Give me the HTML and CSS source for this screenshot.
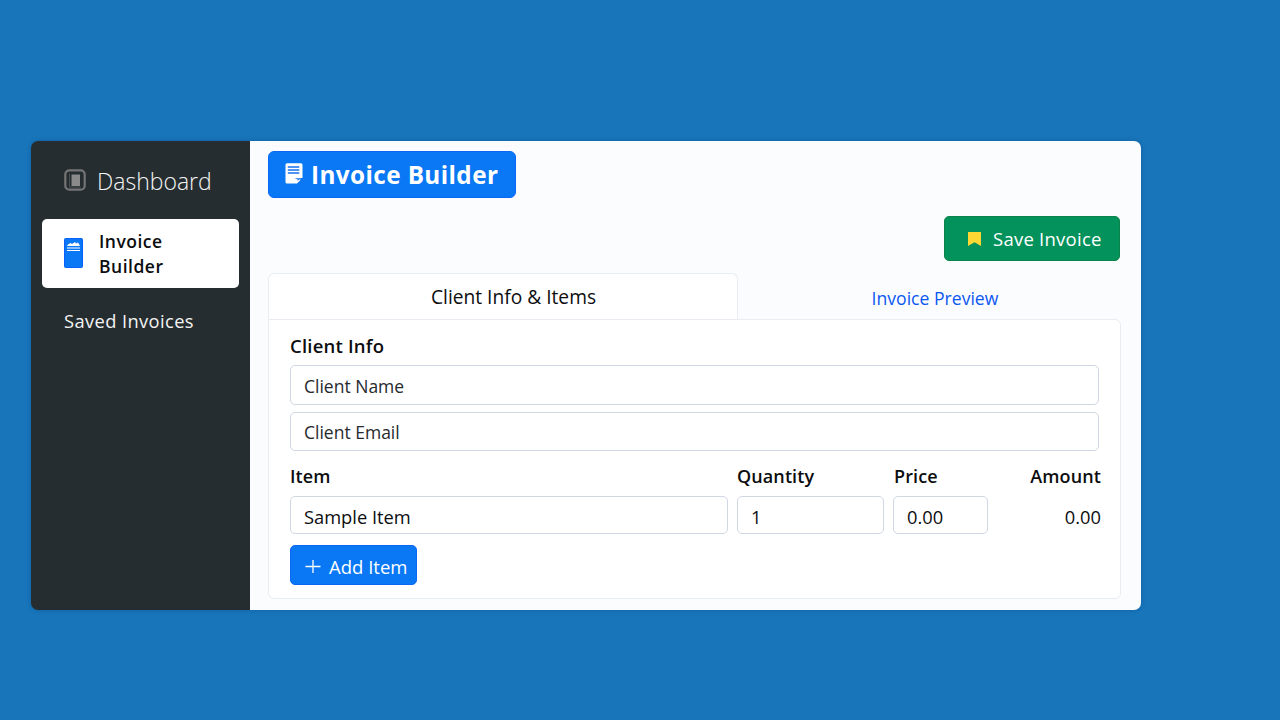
FILE: index.html
```html
<!DOCTYPE html>
<html lang="en">
<head>
<meta charset="utf-8">
<title>Invoice Builder</title>
<link rel="stylesheet" href="styles.css">
</head>
<body>
<div class="app">
  <aside class="sidebar">
    <div class="brand">
      <svg class="brand-icon" width="22" height="22" viewBox="0 0 22 22"><rect x="1.300" y="1.300" width="19.400" height="19.400" rx="4" fill="none" stroke="#747474" stroke-width="2.200"/><path d="M5.500 4.500v13.500h11" stroke="#4c5051" stroke-width="1" fill="none"/><rect x="7.500" y="5.500" width="8.500" height="11.500" fill="#8a8a8a"/></svg>
      <span class="brand-text">Dashboard</span>
    </div>
    <nav class="nav">
      <a class="nav-item active">
        <svg class="nav-icon" width="19" height="30" viewBox="0 0 19 30"><rect x=".5" y=".5" width="18" height="29" rx="1" fill="#0a78f5" stroke="#0860ff"/><path d="M3 8l1-1.500L6.500 5 8 6l3-2 1 1.500L14 4.500l1 1.500 1 2z" fill="#fff"/><path d="M3 10h13M3 12.500h13" stroke="#fff" stroke-width="1.200"/></svg>
        <span class="nav-label">Invoice<br>Builder</span>
      </a>
      <a class="nav-item saved"><span class="saved-label">Saved Invoices</span></a>
    </nav>
  </aside>
  <main class="main">
    <h1 class="title">
      <svg class="title-icon" width="18" height="21" viewBox="0 0 18 21"><path d="M2 .3h14a1.500 1.500 0 0 1 1.500 1.500V15l-2 .2v1.800L12 20.500H2A1.500 1.500 0 0 1 .5 19V1.800A1.500 1.500 0 0 1 2 .3z" fill="#fff"/><path d="M2.800 4h11.500M2.800 7h11.500M2.800 10h11.500" stroke="#1670f0" stroke-width="1.300"/><path d="M9.500 15.200h7.500v1.300h-3l-1.300 1.600v-1.600z" fill="#1670f0"/></svg>
      <span class="title-text">Invoice Builder</span>
    </h1>
    <div class="actions">
      <button class="save">
        <svg width="13" height="14" viewBox="0 0 13 14"><path d="M0 0h13v14l-6.500-3.800L0 14z" fill="#fdd835"/></svg>
        <span class="save-text">Save Invoice</span>
      </button>
    </div>
    <div class="tabs">
      <div class="tab tab-active"><span class="tab-text">Client Info &amp; Items</span></div>
      <div class="tab tab-link"><span class="link-text">Invoice Preview</span></div>
    </div>
    <section class="panel">
      <h2 class="label heading"><span>Client Info</span></h2>
      <div class="field client"><span>Client Name</span></div>
      <div class="field client"><span>Client Email</span></div>
      <div class="items">
        <div class="label"><span>Item</span></div>
        <div class="label"><span>Quantity</span></div>
        <div class="label price"><span>Price</span></div>
        <div class="label end"><span>Amount</span></div>
        <div class="field"><span>Sample Item</span></div>
        <div class="field"><span>1</span></div>
        <div class="field"><span>0.00</span></div>
        <div class="amount end"><span>0.00</span></div>
      </div>
      <button class="add">
        <svg width="16" height="16" viewBox="0 0 16 16"><path d="M8 1v13M.5 7.500h15" stroke="#fff" stroke-width="1.300"/></svg>
        <span class="add-text">Add Item</span>
      </button>
    </section>
  </main>
</div>
</body>
</html>
```
FILE: styles.css
```css
* { box-sizing: border-box; }
body {
  margin: 0;
  height: 720px;
  padding: 141px 139px 110px 31px;
  overflow: hidden;
  background: #1875ba;
  color: #0c0d0f;
  font-family: "Open Sans", "Noto Sans", sans-serif;
  font-size: 18px;
}
span { white-space: nowrap; }
svg { flex: none; display: block; }
.app {
  display: flex;
  height: 469px;
  border-radius: 7px;
  overflow: hidden;
  box-shadow: 0 0 4px rgba(0, 45, 100, .3);
}
.sidebar { flex: none; width: 219px; padding: 0 11px; background: #262d30; color: #f4f4f4; }
.brand { display: flex; align-items: center; gap: 11px; height: 78px; padding-left: 22px; }
.brand-text { margin-top: 2px; font-size: 23px; font-weight: 300; }
.nav-item { display: flex; align-items: center; }
.active {
  height: 69px;
  padding-left: 23px;
  gap: 15px;
  border-radius: 5px;
  background: #fff;
  color: #0c0d0f;
  font-size: 17.500px;
  font-weight: 600;
  letter-spacing: .5px;
  line-height: 25px;
}
.nav-icon { margin: 0 0 2px -1px; }
.nav-label { margin-left: 1px; }
.saved { height: 64px; padding-left: 22px; font-size: 18.300px; letter-spacing: .4px; }
.main { flex: none; width: 891px; padding: 10px 20px 0 18px; background: #fbfcfe; }
.title {
  display: flex;
  align-items: center;
  gap: 8px;
  width: 248px;
  height: 47px;
  margin: 0;
  padding-left: 16px;
  border: 1px solid #0b66f4;
  border-radius: 6px;
  background: #0a78f4;
  color: #fff;
  font-size: 24.300px;
  font-weight: 700;
  letter-spacing: .4px;
}
.title-icon { margin-top: -3px; }
.actions { display: flex; justify-content: flex-end; margin-top: 18px; padding-right: 1px; }
button { display: flex; align-items: center; font: inherit; color: #fff; }
.save {
  width: 176px;
  height: 45px;
  gap: 12px;
  padding: 0 0 0 23px;
  border: 1px solid #0a8449;
  border-radius: 5px;
  background: #03925b;
  font-size: 18.500px;
  letter-spacing: .25px;
}
.tabs { display: flex; height: 46px; margin-top: 12px; }
.tab { display: flex; align-items: center; justify-content: center; }
.tab-active {
  flex: none;
  width: 470px;
  padding-left: 21px;
  border: 1px solid #e9ecf0;
  border-bottom: 0;
  border-radius: 6px 6px 0 0;
  background: #fff;
  font-size: 19.200px;
}
.tab-link { flex: 1; padding: 3px 0 0 11px; color: #0b57ef; font-size: 17.600px; }
.panel {
  height: 280px;
  padding: 12px 21px 0;
  border: 1px solid #e9ecf0;
  border-radius: 0 6px 6px;
  background: #fff;
}
.label { display: flex; align-items: center; height: 28px; margin: 0; font-size: 18px; font-weight: 550; letter-spacing: .1px; }
.heading { padding-bottom: 2px; font-size: 18.500px; letter-spacing: .2px; }
.price { padding-left: 1px; }
.field {
  display: flex;
  align-items: center;
  height: 38px;
  padding: 2px 0 0 13px;
  border: 1px solid #cfd7e2;
  border-radius: 5px;
  background: #fff;
  font-size: 18.300px;
}
.client { height: 40px; margin-top: 5px; padding-top: 1px; color: #26292d; font-size: 17.500px; }
.client + .client { height: 39px; margin-top: 7px; }
.items {
  display: grid;
  grid-template-columns: 438px 147px 95px 104px;
  grid-template-rows: 28px 38px;
  gap: 6px 9px;
  margin-top: 11px;
}
.end { display: flex; justify-content: flex-end; align-items: center; }
.amount { padding-top: 2px; font-size: 18.300px; }
.add {
  width: 127px;
  height: 40px;
  gap: 8px;
  margin-top: 11px;
  padding: 3px 0 0 14px;
  border: 1px solid #0b66f4;
  border-radius: 5px;
  background: #0a78f4;
  font-size: 18.500px;
}
```
